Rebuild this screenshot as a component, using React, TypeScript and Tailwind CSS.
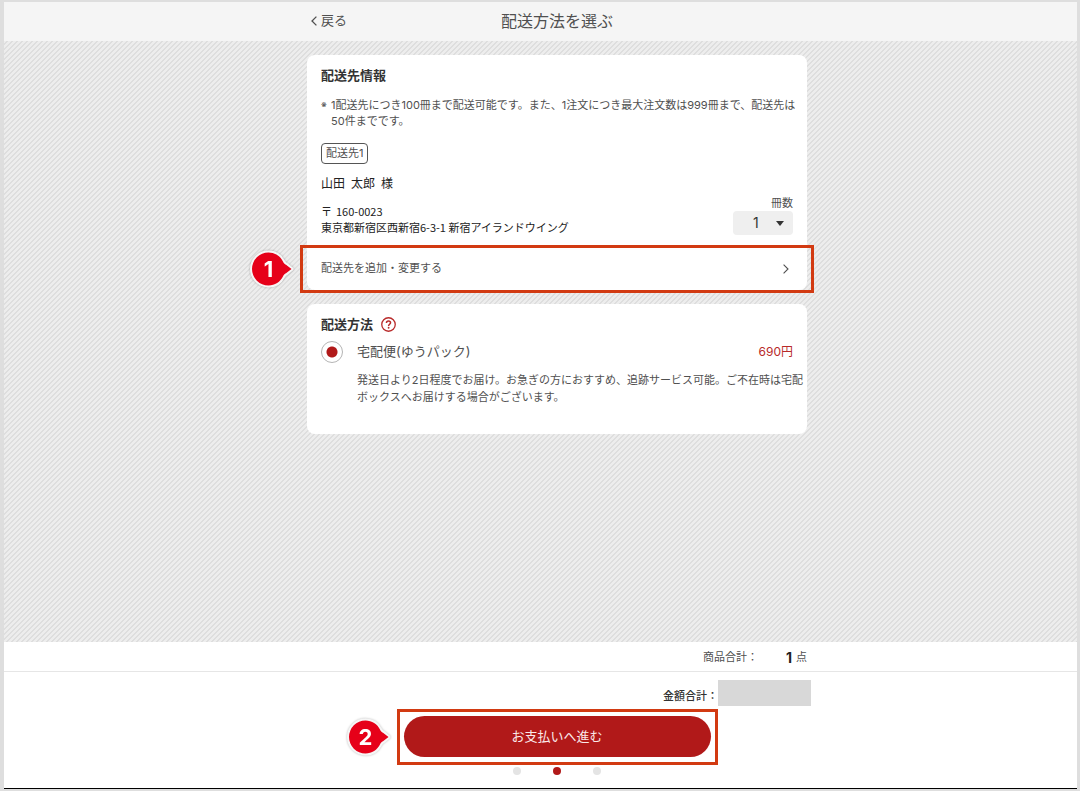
import { useState } from "react";
import type { ReactNode } from "react";

const STEPS = ["shipping-address", "shipping-method", "payment"];
const CURRENT_STEP = 1;

export default function App() {
  const [copies, setCopies] = useState("1");

  return (
    <div className="flex min-h-screen flex-col border-t-2 border-r-3 border-b-2 border-l-4 border-[#dedede] bg-white font-['Inter','Noto_Sans_CJK_JP',sans-serif] text-[11px] text-[#505050]">
      <header className="bg-[#f5f5f5] pl-[33px]">
        <Column className="flex h-[39px] items-center justify-center pb-0.5">
          <a href="#back" className="absolute left-1 flex items-center gap-1 text-[13px]">
            <svg viewBox="0 0 6 10" className="h-2.5 w-1.5" fill="none" stroke="currentColor" strokeWidth="1.3">
              <path d="M5.4 0.6 1 5l4.4 4.4" />
            </svg>
            戻る
          </a>
          <h1 className="text-base">配送方法を選ぶ</h1>
        </Column>
      </header>

      <main className="flex-1 bg-[linear-gradient(135deg,#ededed_25%,#dedede_25%,#dedede_50%,#ededed_50%,#ededed_75%,#dedede_75%)] bg-size-[5px_5px] pt-3.5 pb-6 pl-[33px]">
        <Column className="flex flex-col gap-3.5">
          <AddressCard copies={copies} onCopiesChange={setCopies} />
          <MethodCard />
        </Column>
      </main>

      <footer className="border-b border-black">
        <div className="border-b border-[#e6e6e6] pl-[33px]">
          <Column className="flex h-[29px] items-center justify-end pt-0.5">
            <span className="mr-7">商品合計：</span>
            <span className="mr-1 text-sm font-bold text-[#222]">{copies}</span>
            <span>点</span>
          </Column>
        </div>
        <div className="pt-2 pb-[13px] pl-[33px]">
          <Column>
            <div className="-mr-1 flex items-center justify-end">
              <span className="mt-1.5 font-medium text-[#333]">金額合計：</span>
              <span className="h-[26px] w-[93px] bg-[#d8d8d8]" />
            </div>
            <div className="relative mx-auto mt-2.5 w-[307px]">
              <button type="button" className="h-[41px] w-full rounded-full bg-[#b11919] text-[13px] text-[#fbe9e9]">
                お支払いへ進む
              </button>
              <Highlight step={2} />
            </div>
            <ol className="mt-2.5 flex justify-center gap-8" aria-label="ステップ">
              {STEPS.map((step, i) => (
                <li
                  key={step}
                  aria-current={i === CURRENT_STEP ? "step" : undefined}
                  className={i === CURRENT_STEP ? "size-2 rounded-full bg-[#b11919]" : "size-2 rounded-full bg-[#e4e4e4]"}
                />
              ))}
            </ol>
          </Column>
        </div>
      </footer>
    </div>
  );
}

function Column({ className = "", children }: { className?: string; children: ReactNode }) {
  return <div className={`relative mx-auto w-full max-w-[500px] ${className}`}>{children}</div>;
}

function AddressCard({ copies, onCopiesChange }: { copies: string; onCopiesChange: (value: string) => void }) {
  return (
    <section className="rounded-lg bg-white pt-2.5">
      <div className="px-3.5 pb-3">
        <h2 className="text-[13px] leading-5 font-bold text-[#333]">配送先情報</h2>
        <p className="mt-3 -mr-3 flex leading-4">
          <span className="w-2.5 shrink-0 text-[9px]">※</span>
          <span>
            1配送先につき100冊まで配送可能です。また、1注文につき最大注文数は999冊まで、配送先は50件までです。
          </span>
        </p>
        <span className="mt-3.5 inline-flex h-[21px] items-center rounded-sm border border-[#555] px-1">配送先1</span>
        <div className="flex items-end justify-between">
          <div className="font-['Noto_Sans_CJK_JP',sans-serif] text-[#222]">
            <p className="mt-2.5 flex gap-1.5 text-xs leading-[18px]">
              <span>山田</span> <span>太郎</span> <span>様</span>
            </p>
            <p className="mt-[11px] flex gap-1 leading-4">
              <span>〒</span> <span>160-0023</span>
            </p>
            <p className="leading-4">東京都新宿区西新宿6-3-1 新宿アイランドウイング</p>
          </div>
          <div className="flex flex-col items-end">
            <label htmlFor="copies" className="leading-4">
              冊数
            </label>
            <div className="relative">
              <select
                id="copies"
                value={copies}
                onChange={(e) => onCopiesChange(e.target.value)}
                className="block h-6 w-[60px] appearance-none rounded-sm bg-[#efefef] pl-5 text-sm text-[#333]"
              >
                <option>1</option>
                <option>2</option>
                <option>3</option>
              </select>
              <svg viewBox="0 0 8 5" className="pointer-events-none absolute top-2.5 right-[9px] h-[5px] w-2" fill="#333">
                <path d="M0 0h8L4 5z" />
              </svg>
            </div>
          </div>
        </div>
      </div>
      <div className="relative">
        <button type="button" className="flex h-[43px] w-full items-center justify-between pr-[18px] pl-3.5">
          配送先を追加・変更する
          <svg viewBox="0 0 6 10" className="h-2.5 w-1.5" fill="none" stroke="currentColor" strokeWidth="1.1">
            <path d="M0.6 0.6 5 5 0.6 9.4" />
          </svg>
        </button>
        <Highlight step={1} />
      </div>
    </section>
  );
}

function MethodCard() {
  return (
    <section className="rounded-lg bg-white px-3.5 pt-2.5 pb-7">
      <div className="flex items-center gap-2">
        <h2 className="text-[13px] leading-5 font-bold text-[#333]">配送方法</h2>
        <button type="button" aria-label="配送方法について">
          <HelpIcon />
        </button>
      </div>
      <div className="mt-[7px] flex h-[22px] items-center">
        <input
          type="radio"
          id="yupack"
          name="method"
          defaultChecked
          className="size-[22px] appearance-none rounded-full border border-[#b5b5b5] bg-white bg-[radial-gradient(circle,#b11919_5px,transparent_6px)]"
        />
        <label htmlFor="yupack" className="ml-3.5 flex-1 text-[13px]">
          宅配便(ゆうパック)
        </label>
        <span className="text-xs text-[#b82a2a]">690円</span>
      </div>
      <p className="mt-[9px] -mr-3 ml-9 leading-[17px]">
        発送日より2日程度でお届け。お急ぎの方におすすめ、追跡サービス可能。ご不在時は宅配ボックスへお届けする場合がございます。
      </p>
    </section>
  );
}

function HelpIcon() {
  return (
    <svg viewBox="0 0 14 14" className="size-[15px]" fill="none" stroke="#b82a2a">
      <circle cx="7" cy="7" r="6.3" strokeWidth="1.2" />
      <path d="M5.1 5.6c0-1.2.8-1.9 1.9-1.9s1.9.7 1.9 1.7c0 1.3-1.8 1.4-1.8 2.9" strokeWidth="1.4" />
      <circle cx="7.1" cy="10" r="0.85" fill="#b82a2a" stroke="none" />
    </svg>
  );
}

// Red guide frame with its numbered pin on the left
function Highlight({ step }: { step: number }) {
  const frame = step === 1 ? "-top-0.5 -bottom-[3px]" : "-top-[7px] -bottom-2";
  return (
    <div className={`pointer-events-none absolute -inset-x-[7px] border-3 border-[#d23a12] ${frame}`}>
      <svg
        viewBox="0 0 46 40"
        className="absolute top-1/2 right-full mr-2 h-10 w-[46px] -translate-y-1/2 drop-shadow-[0_0_1px_#0004]"
      >
        <path
          d="M19.5 3.5a16.5 16.5 0 1 0 0 33c6.4 0 11.8-3.5 14.6-9.2.6-1.300 1.500-2.200 2.900-3L42.500 20l-5.500-4.300c-1.400-.8-2.300-1.700-2.900-3C31.300 7 25.900 3.500 19.500 3.500z"
          fill="#e60019"
          stroke="#f6f6f6"
          strokeWidth="4"
          strokeLinejoin="round"
          paintOrder="stroke"
        />
        <text x="19.5" y="27.5" textAnchor="middle" fill="#fff" className="font-['Inter',sans-serif] text-[22px] font-bold">
          {step}
        </text>
      </svg>
    </div>
  );
}
